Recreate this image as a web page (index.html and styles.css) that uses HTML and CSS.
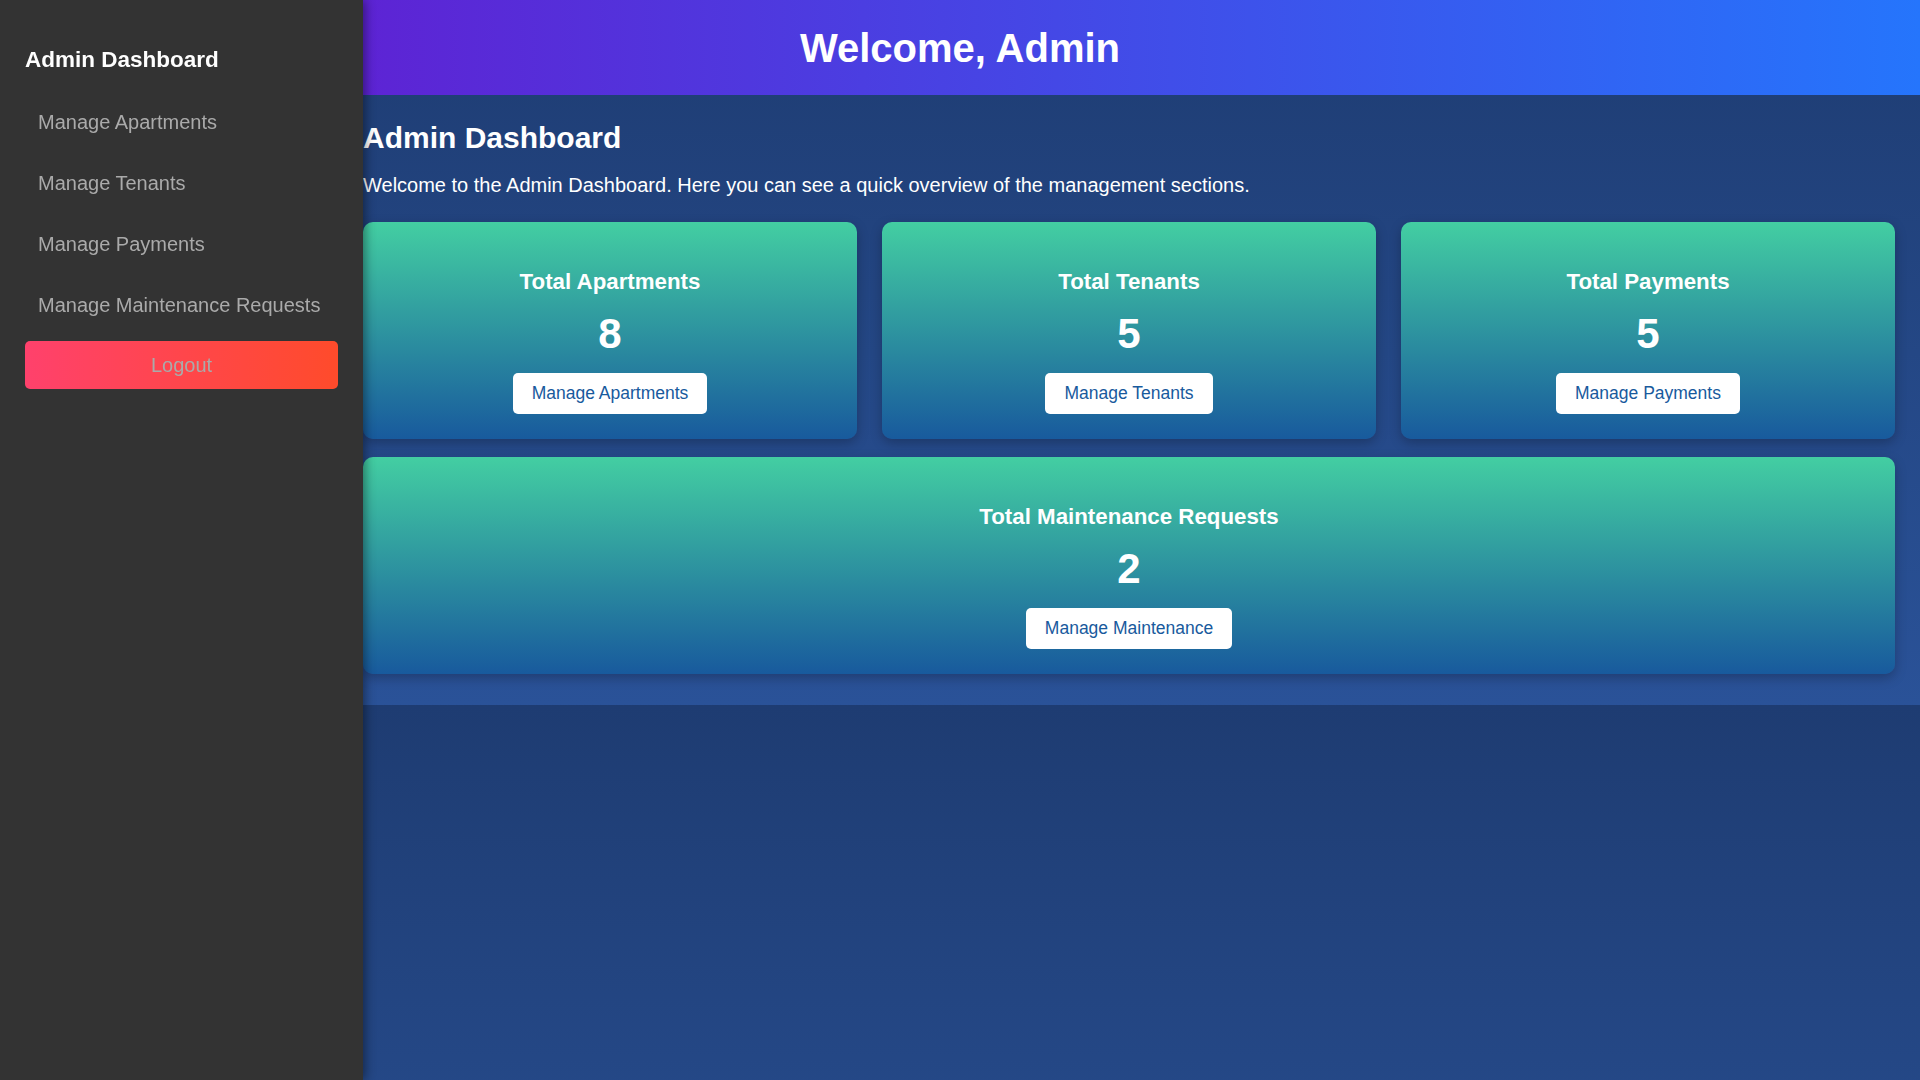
FILE: index.html
```html
<!DOCTYPE html>
<html lang="en">
<head>
<meta charset="utf-8">
<title>Admin Dashboard</title>
<link rel="stylesheet" href="styles.css">
</head>
<body>
<aside class="sidebar">
  <h2 class="sidebar-title">Admin Dashboard</h2>
  <nav class="nav">
    <a class="nav-link" href="#">Manage Apartments</a>
    <a class="nav-link" href="#">Manage Tenants</a>
    <a class="nav-link" href="#">Manage Payments</a>
    <a class="nav-link" href="#">Manage Maintenance Requests</a>
  </nav>
  <a class="logout" href="#">Logout</a>
</aside>

<header class="topbar">
  <h1 class="topbar-title">Welcome, Admin</h1>
</header>

<main class="main">
  <h2 class="page-title">Admin Dashboard</h2>
  <p class="intro">Welcome to the Admin Dashboard. Here you can see a quick overview of the management sections.</p>

  <section class="cards">
    <div class="card">
      <h3 class="card-title">Total Apartments</h3>
      <p class="card-number">8</p>
      <a class="card-btn" href="#">Manage Apartments</a>
    </div>
    <div class="card">
      <h3 class="card-title">Total Tenants</h3>
      <p class="card-number">5</p>
      <a class="card-btn" href="#">Manage Tenants</a>
    </div>
    <div class="card">
      <h3 class="card-title">Total Payments</h3>
      <p class="card-number">5</p>
      <a class="card-btn" href="#">Manage Payments</a>
    </div>
  </section>

  <section class="cards cards-wide">
    <div class="card">
      <h3 class="card-title">Total Maintenance Requests</h3>
      <p class="card-number">2</p>
      <a class="card-btn" href="#">Manage Maintenance</a>
    </div>
  </section>
</main>
</body>
</html>
```

FILE: styles.css
```css
* {
  box-sizing: border-box;
}

html, body {
  margin: 0;
  padding: 0;
}

body {
  font-family: "Liberation Sans", Arial, sans-serif;
  color: #ffffff;
  background: linear-gradient(to bottom, #1e3c72, #2a5298);
  background-size: 100% 705px;
  background-repeat: repeat-y;
}

/* Sidebar */
.sidebar {
  position: fixed;
  top: 0;
  left: 0;
  width: 363px;
  height: 100vh;
  padding: 25px;
  background: #333333;
  box-shadow: 2px 0 10px rgba(0, 0, 0, 0.45);
  z-index: 10;
  display: flex;
  flex-direction: column;
}

.sidebar-title {
  margin: 22px 0 20px;
  font-size: 22.5px;
  line-height: 25px;
  font-weight: bold;
  color: #ffffff;
}

.nav {
  display: flex;
  flex-direction: column;
}

.nav-link {
  display: flex;
  align-items: center;
  height: 61px;
  padding: 0 13px;
  font-size: 20px;
  line-height: 23px;
  color: #aaaaaa;
  text-decoration: none;
}

.logout {
  display: flex;
  align-items: center;
  justify-content: center;
  margin-top: 5px;
  height: 48px;
  border-radius: 5px;
  background: linear-gradient(to right, #ff416c, #ff4b2b);
  font-size: 20px;
  color: #aaaaaa;
  text-decoration: none;
}

/* Top bar */
.topbar {
  height: 95px;
  display: flex;
  align-items: center;
  justify-content: center;
  background: linear-gradient(to right, #6a11cb, #2575fc);
}

.topbar-title {
  margin: 0;
  font-size: 40px;
  line-height: 46px;
  font-weight: bold;
  color: #ffffff;
}

/* Main */
.main {
  margin-left: 363px;
  padding: 25px 25px 31px 0;
}

.page-title {
  margin: 0;
  font-size: 30px;
  line-height: 35px;
  font-weight: bold;
}

.intro {
  margin: 19px 0 25px;
  font-size: 20px;
  line-height: 23px;
}

.cards {
  display: grid;
  grid-template-columns: repeat(3, 1fr);
  gap: 25px;
}

.cards-wide {
  grid-template-columns: 1fr;
  margin-top: 18px;
}

.card {
  height: 217px;
  padding: 25px;
  border-radius: 10px;
  background: linear-gradient(to bottom, #43cea2, #185a9d);
  box-shadow: 0 4px 12px rgba(0, 0, 0, 0.25);
  display: flex;
  flex-direction: column;
  align-items: center;
  text-align: center;
}

.card-title {
  margin: 22px 0 16px;
  font-size: 22.3px;
  line-height: 25px;
  font-weight: bold;
}

.card-number {
  margin: 0 0 15px;
  font-size: 42px;
  line-height: 48px;
  font-weight: bold;
}

.card-btn {
  display: block;
  height: 41px;
  padding: 10px 19px;
  border-radius: 5px;
  background: #ffffff;
  color: #185a9d;
  font-size: 17.5px;
  line-height: 20px;
  text-decoration: none;
}
```
